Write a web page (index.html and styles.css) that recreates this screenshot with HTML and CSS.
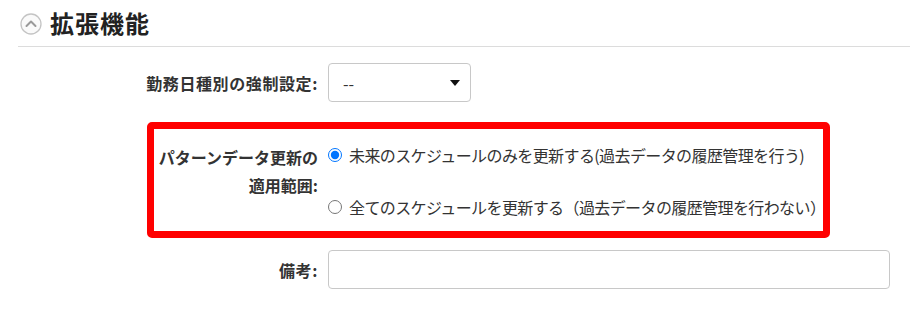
FILE: index.html
```html
<!DOCTYPE html>
<html lang="ja">
<head>
   <meta charset="UTF-8">
   <meta name="viewport" content="width=device-width, initial-scale=1.0">
   <title>拡張機能</title>
   <link rel="stylesheet" href="styles.css">
</head>
<body>
   <!-- 見出し -->
   <div class="section-head">
       <span class="toggle-icon">
           <svg width="22" height="22" viewBox="0 0 22 22">
               <circle cx="11" cy="11" r="10" fill="#fafafa" stroke="#c4c4c4" stroke-width="1.3"/>
               <path d="M6.5 13 L11 8.5 L15.5 13" fill="none" stroke="#9a9a9a" stroke-width="2" stroke-linecap="round" stroke-linejoin="round"/>
           </svg>
       </span>
       <h2>拡張機能</h2>
   </div>

   <div class="form-body">
       <div class="form-row">
           <label class="row-label">勤務日種別の強制設定:</label>
           <div class="fake-select">
               <span>--</span>
               <span class="caret"></span>
           </div>
       </div>

       <!-- 強調枠 -->
       <div class="highlight">
           <div class="form-row inner">
               <label class="row-label multi">パターンデータ更新の<br>適用範囲:</label>
               <div class="radio-group">
                   <label class="radio-line"><input type="radio" name="scope" checked> 未来のスケジュールのみを更新する(過去データの履歴管理を行う)</label>
                   <label class="radio-line"><input type="radio" name="scope"> 全てのスケジュールを更新する（過去データの履歴管理を行わない）</label>
               </div>
           </div>
       </div>

       <div class="form-row">
           <label class="row-label">備考:</label>
           <input type="text" class="text-input">
       </div>
   </div>
</body>
</html>
```

FILE: styles.css
```css
body {
    margin: 0;
    font-family: "Noto Sans CJK JP", "Noto Sans", sans-serif;
    color: #333;
    background-color: #fff;
}
.section-head {
    display: flex;
    align-items: center;
    gap: 8px;
    height: 46px;
    margin-left: 18px;
    padding-left: 2px;
    border-bottom: 1px solid #dcdcdc;
}
.toggle-icon {
    display: flex;
    margin-top: 2px;
}
.section-head h2 {
    margin: 0;
    font-size: 24px;
    line-height: 30px;
    font-weight: bold;
    letter-spacing: 1px;
    color: #222;
}
.form-body {
    padding-top: 16px;
}
.form-row {
    display: grid;
    grid-template-columns: 328px auto;
    align-items: center;
}
.row-label {
    text-align: right;
    padding-right: 10px;
    font-size: 16px;
    font-weight: bold;
    line-height: 24px;
    white-space: nowrap;
    letter-spacing: 0.6px;
}
.fake-select {
    width: 143px;
    height: 39px;
    box-sizing: border-box;
    border: 1px solid #c8c8c8;
    border-radius: 4px;
    display: flex;
    align-items: center;
    justify-content: space-between;
    padding: 0 10px 0 14px;
    font-size: 16px;
}
.caret {
    width: 0;
    height: 0;
    border-left: 5px solid transparent;
    border-right: 5px solid transparent;
    border-top: 6px solid #111;
}
.highlight {
    margin: 20px 0 12px 147px;
    width: 683px;
    box-sizing: border-box;
    border: 7px solid #f00;
    border-radius: 5px;
    padding: 12px 0 10px;
}
.form-row.inner {
    grid-template-columns: 174px auto;
    align-items: start;
}
.row-label.multi {
    line-height: 28px;
    padding-top: 2px;
    letter-spacing: 0;
}
.radio-group {
    display: flex;
    flex-direction: column;
    gap: 24px;
}
.radio-line {
    display: flex;
    align-items: center;
    font-size: 16px;
    line-height: 28px;
    white-space: nowrap;
    letter-spacing: -0.6px;
}
.radio-line input {
    width: 14px;
    height: 14px;
    margin: 0 7px 0 0;
}
.text-input {
    width: 562px;
    height: 39px;
    box-sizing: border-box;
    border: 1px solid #c8c8c8;
    border-radius: 4px;
    margin: 0;
}
```
